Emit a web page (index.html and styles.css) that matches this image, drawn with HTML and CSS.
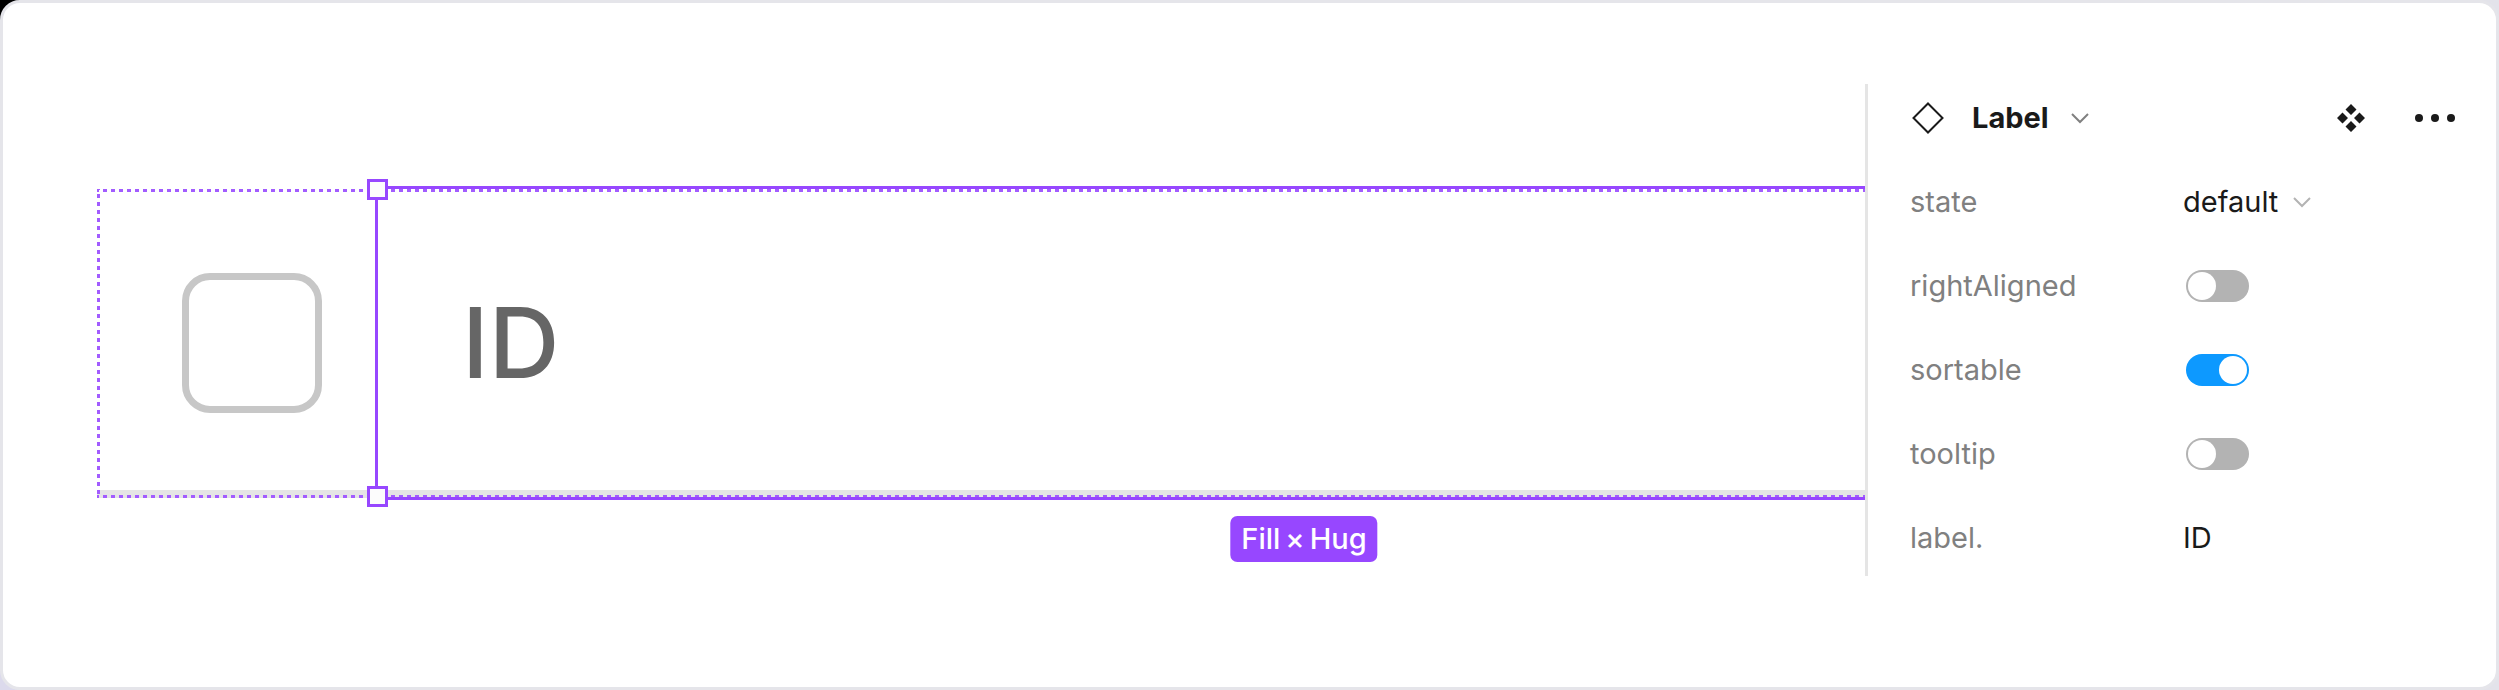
FILE: index.html
```html
<!DOCTYPE html>
<html lang="en">
<head>
<meta charset="utf-8">
<title>Label component</title>
<meta name="viewport" content="width=device-width, initial-scale=1">
<link rel="stylesheet" href="styles.css">
</head>
<body>
<main class="card">
  <section class="stage">
    <div class="row">
      <div class="cell-check"><input class="check" type="checkbox" aria-label="Select row"></div>
      <div class="cell-label">ID</div>
      <div class="dots"></div>
      <div class="selection">
        <span class="handle handle-top"></span>
        <span class="handle handle-bottom"></span>
      </div>
      <span class="size"><span>Fill</span><span>×</span><span>Hug</span></span>
    </div>
  </section>
  <aside class="panel">
    <header class="head">
      <svg class="icon-instance" viewBox="0 0 32 32" aria-hidden="true"><path d="M16 1.500 30.500 16 16 30.500 1.500 16Z"/></svg>
      <button class="name" type="button">Label
        <svg class="chevron" viewBox="0 0 18 12" aria-hidden="true"><path d="M1 2 9 10 17 2"/></svg>
      </button>
      <button class="tool" type="button" aria-label="Go to main component">
        <svg class="icon-component" viewBox="0 0 28 28" aria-hidden="true"><path d="M14 0 19.500 5.500 14 11 8.500 5.500ZM5.500 8.500 11 14 5.500 19.500 0 14ZM22.500 8.500 28 14 22.500 19.500 17 14ZM14 17 19.500 22.500 14 28 8.500 22.500Z"/></svg>
      </button>
      <button class="tool" type="button" aria-label="More">
        <svg class="icon-more" viewBox="0 0 40 8" aria-hidden="true"><circle cx="4" cy="4" r="4"/><circle cx="20" cy="4" r="4"/><circle cx="36" cy="4" r="4"/></svg>
      </button>
    </header>
    <div class="prop">
      <label for="state">state</label>
      <div class="picker">
        <select id="state"><option>default</option></select>
        <svg class="chevron chevron-light" viewBox="0 0 18 12" aria-hidden="true"><path d="M1 2 9 10 17 2"/></svg>
      </div>
    </div>
    <div class="prop"><label for="right">rightAligned</label><input class="toggle" id="right" type="checkbox"></div>
    <div class="prop"><label for="sort">sortable</label><input class="toggle" id="sort" type="checkbox" checked></div>
    <div class="prop"><label for="tip">tooltip</label><input class="toggle" id="tip" type="checkbox"></div>
    <div class="prop"><label for="text">label.</label><input class="text" id="text" type="text" value="ID"></div>
  </aside>
</main>
</body>
</html>
```
FILE: styles.css
```css
* { box-sizing: border-box; }
body {
  margin: 0;
  background: linear-gradient(#000 50%, #dcdaec 50%) 0 0 / 50% 100% no-repeat #e3e3ea;
  font-family: Inter, "Liberation Sans", sans-serif;
  font-size: 29px;
  line-height: 36px;
  color: #1a1a1a;
}
button, input, select {
  appearance: none;
  margin: 0;
  padding: 0;
  border: 0;
  background: none;
  font: inherit;
  color: inherit;
}
svg { display: block; flex: none; fill: none; }
.card {
  display: flex;
  align-items: flex-start;
  min-height: 100vh;
  padding: 81px 0;
  border: 3px solid #e5e5ea;
  border-radius: 20px;
  background: #fff;
}
.stage { flex: 1; min-width: 0; padding: 105px 0 0 94px; }
.row {
  position: relative;
  display: flex;
  height: 309px;
  border-bottom: 8px solid #e5e5e5;
}
.cell-check { width: 279px; padding: 84px 0 0 85px; }
.check {
  display: block;
  width: 140px;
  height: 140px;
  border: 7px solid #c7c7c7;
  border-radius: 28px;
}
.cell-label {
  flex: 1;
  padding: 94px 86px;
  font-size: 98px;
  line-height: 120px;
  font-weight: 500;
  color: #666;
}
.dots {
  position: absolute;
  inset: 0 0 -8px;
  background:
    linear-gradient(90deg, #a25cff 50%, transparent 50%) 6px 0 / 8px 3px repeat-x,
    linear-gradient(90deg, #a25cff 50%, transparent 50%) 6px 100% / 8px 3px repeat-x,
    linear-gradient(#a25cff 50%, transparent 50%) 0 5px / 3px 8px repeat-y;
}
.selection {
  position: absolute;
  inset: -3px 0 -10px 278px;
  border: solid #9747ff;
  border-width: 3px 0 3px 3px;
}
.handle {
  position: absolute;
  left: -11px;
  width: 21px;
  height: 21px;
  border: 3px solid #9747ff;
  background: #fcfcfc;
}
.handle-top { top: -10px; }
.handle-bottom { bottom: -10px; }
.size {
  position: absolute;
  top: 100%;
  left: calc(50% + 323px);
  display: flex;
  gap: 5px;
  margin-top: 26px;
  transform: translateX(-50%);
  padding: 5px 11px;
  border-radius: 7px;
  background: #9747ff;
  color: #fff;
  font-weight: 500;
  white-space: nowrap;
}
.panel {
  display: grid;
  gap: 48px;
  width: 631px;
  padding: 16px 41px 20px 42px;
  border-left: 3px solid #e5e5e5;
}
.head { display: flex; align-items: center; height: 36px; }
.icon-instance { width: 32px; height: 32px; margin-left: 2px; stroke: #1a1a1a; stroke-width: 2; }
.name {
  display: flex;
  align-items: center;
  gap: 22px;
  margin: 0 auto 0 28px;
  font-weight: 700;
}
.chevron { width: 18px; height: 12px; stroke: #808080; stroke-width: 2; }
.chevron-light { stroke: #b3b3b3; }
.tool { margin-left: 50px; }
.tool svg { fill: #1a1a1a; }
.icon-component { width: 28px; height: 28px; }
.icon-more { width: 40px; height: 8px; }
.prop {
  display: grid;
  grid-template-columns: 273px 1fr;
  align-items: center;
  height: 36px;
}
.prop label { color: #808080; }
.picker { display: flex; align-items: center; gap: 14px; }
.toggle {
  width: 63px;
  height: 32px;
  margin-left: 3px;
  padding: 2px;
  border-radius: 16px;
  background: #b3b3b3;
}
.toggle::before {
  content: "";
  display: block;
  width: 28px;
  height: 28px;
  border-radius: 50%;
  background: #fff;
}
.toggle:checked { background: #0d99ff; }
.toggle:checked::before { margin-left: auto; }
.text { width: 100%; }
```
